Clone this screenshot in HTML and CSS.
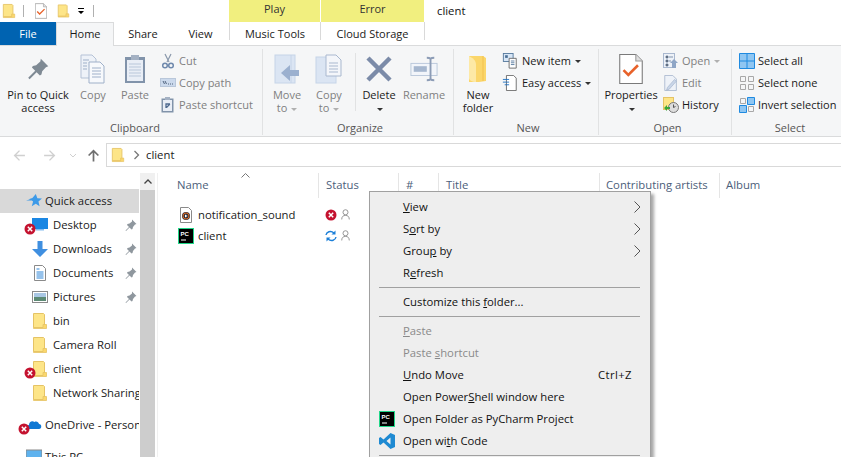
FILE: index.html
```html
<!DOCTYPE html>
<html lang="en">
<head>
  <meta charset="UTF-8" />
  <title>client</title>
  <link rel="stylesheet" href="styles.css">
</head>
<body>
  <svg class="defs" width="0" height="0">
    <symbol id="folder" viewBox="0 0 16 16">
      <path d="M1.500 .5h10l1 1v13h-11z" fill="#fde588" stroke="#e5c365"/>
      <path d="M11 11.500h3.500v4h-13v-1h9.500z" fill="#fbd76c" stroke="#e5c365" stroke-width=".8"/>
    </symbol>
    <symbol id="badge" viewBox="0 0 12 12">
      <circle cx="6" cy="6" r="5.500" fill="#c4122f"/>
      <path d="M3.800 3.800l4.400 4.400M8.200 3.800l-4.400 4.400" stroke="#fff" stroke-width="1.500"/>
    </symbol>
    <symbol id="pin" viewBox="0 0 12 12">
      <path d="M7 .5l4.500 4.500-1.500 .5-2 2.500-.5 2-1 .5-2-2-3.500 3.500-.5-.5 3.500-3.500-2-2 .5-1 2-.5 2.500-2z" fill="#8f979e"/>
    </symbol>
    <symbol id="pycharm" viewBox="0 0 16 16">
      <rect x=".5" y=".5" width="15" height="15" fill="#000" stroke="#21d789"/>
      <text x="2.500" y="7.500" class="pc-text">PC</text>
      <rect x="3" y="11.500" width="5" height="1" fill="#fff"/>
    </symbol>
    <symbol id="person" viewBox="0 0 10 12">
      <circle cx="5" cy="3.500" r="2.800" fill="none" stroke="#8b8b8b"/>
      <path d="M.8 11.500c0-3 1.500-4.500 4.200-4.500s4.200 1.500 4.200 4.500" fill="none" stroke="#8b8b8b"/>
    </symbol>
    <symbol id="chevron" viewBox="0 0 7 12">
      <path d="M.5 .5l5.500 5.500-5.500 5.500" fill="none" stroke="#555"/>
    </symbol>
    <symbol id="page-check" viewBox="0 0 22 28">
      <path d="M.5 .5h15l6 6v21h-21z" fill="#fff" stroke="#7a7a7a"/>
      <path d="M15.500 .5v6h6" fill="#e0e0e0" stroke="#9a9a9a"/>
      <path d="M4 15l4.500 4.500 9-9" fill="none" stroke="#e8622a" stroke-width="2.400"/>
    </symbol>
  </svg>

  <div class="titlebar">
    <svg class="qa-folder"><use href="#folder"/></svg>
    <span class="qa-sep"></span>
    <svg class="qa-page"><use href="#page-check"/></svg>
    <svg class="qa-folder2"><use href="#folder"/></svg>
    <svg class="qa-drop" viewBox="0 0 8 8"><path d="M1 1h6v1H1zM1 4h6L4 7z" fill="#000"/></svg>
    <span class="qa-sep"></span>
    <div class="tool-heads">
      <span class="tool-head head-play">Play</span>
      <span class="tool-head head-error">Error</span>
    </div>
    <span class="win-title">client</span>
  </div>

  <div class="tabs">
    <span class="tab tab-file">File</span>
    <span class="tab tab-home">Home</span>
    <span class="tab tab-share">Share</span>
    <span class="tab tab-view">View</span>
    <span class="tab tab-music">Music Tools</span>
    <span class="tab tab-cloud">Cloud Storage</span>
  </div>

  <div class="ribbon">
    <section class="group group-clipboard">
      <div class="group-body">
        <div class="big w60">
          <svg class="big-icon" viewBox="-3 -3 30 30"><path d="M15 1l8 8-2.500 1-4 4.500-.8 3.500-1.700 1-3.500-3.500-7.500 7.500-1.500-1.500 7.500-7.500-3.500-3.500 1-1.700 3.500-.8 4.500-4z" fill="#7f8a94"/></svg>
          <span>Pin to Quick<br>access</span>
        </div>
        <div class="big w50 off">
          <svg class="big-icon" viewBox="0 0 26 30"><path d="M1 1h11l4 4v19H1z" fill="#eef2f8" stroke="#b5c2d6"/><path d="M9 8h11l4 4v17H9z" fill="#f7f9fc" stroke="#9fb0c9"/><path d="M12 14h9M12 17h9M12 20h9M12 23h9M3 6h6M3 9h4M3 12h4M3 15h4" stroke="#9fb0c9"/></svg>
          <span>Copy</span>
        </div>
        <div class="big w34 off">
          <svg class="big-icon" viewBox="0 0 22 30"><rect x="1" y="3" width="20" height="26" fill="#8193aa"/><rect x="3" y="6" width="16" height="21" fill="#e9eef6"/><rect x="7" y="1" width="8" height="5" fill="#a4b1c3"/><path d="M5 10h12M5 13h12M5 16h12M5 19h12M5 22h12" stroke="#b9c7da"/></svg>
          <span>Paste</span>
        </div>
        <div class="small-col col-clip">
          <div class="small off">
            <svg class="small-icon" viewBox="0 0 16 16"><path d="M5 1l4 8M11 1L7 9" stroke="#8a98ab" stroke-width="1.200"/><circle cx="5" cy="12.500" r="2.300" fill="none" stroke="#6f89ad" stroke-width="1.500"/><circle cx="11" cy="12.500" r="2.300" fill="none" stroke="#6f89ad" stroke-width="1.500"/></svg>
            <span>Cut</span>
          </div>
          <div class="small off">
            <svg class="small-icon" viewBox="0 0 16 16"><rect x=".5" y="3.500" width="15" height="8" fill="#cbd9ec" stroke="#b9c7da"/><path d="M3 6l1.500 3M5 6l1.500 3M8 9h1M10 9h1M12 9h1" stroke="#51647f"/></svg>
            <span>Copy path</span>
          </div>
          <div class="small off">
            <svg class="small-icon" viewBox="0 0 16 16"><rect x="1.500" y="1.500" width="12" height="14" fill="#8193aa"/><rect x="3" y="3" width="9" height="11" fill="#e9eef6"/><rect x="5" y="0" width="5" height="3" fill="#a4b1c3"/><path d="M6 11V7h4M6.500 10.500L10 7" fill="none" stroke="#4f6a8f" stroke-width="1.300"/></svg>
            <span>Paste shortcut</span>
          </div>
        </div>
      </div>
      <div class="group-label">Clipboard</div>
    </section>

    <section class="group group-organize">
      <div class="group-body">
        <div class="big w40 off">
          <svg class="big-icon" viewBox="0 0 28 30"><rect x="2" y="1" width="20" height="28" fill="#dbe5f3" stroke="#c6d4e8"/><path d="M18 1v28" stroke="#c6d4e8"/><path d="M8 19l9-8v5h9v6h-9v5z" fill="#9bb0cf"/></svg>
          <span>Move<br>to <i class="caret light"></i></span>
        </div>
        <div class="big w40 off">
          <svg class="big-icon" viewBox="0 0 28 30"><rect x="1" y="3" width="20" height="26" fill="#dbe5f3" stroke="#c6d4e8"/><path d="M11 1h10l5 5v16H11z" fill="#f4f6fa" stroke="#a9b8cf"/><path d="M14 9h9M14 12h9M14 15h9M14 18h9" stroke="#a9b8cf"/></svg>
          <span>Copy<br>to <i class="caret light"></i></span>
        </div>
        <span class="sub-sep"></span>
        <div class="big w40">
          <svg class="big-icon" viewBox="0 0 28 28"><path d="M3 3l22 22M25 3L3 25" stroke="#7b8ba8" stroke-width="4.500"/></svg>
          <span>Delete<br><i class="caret"></i></span>
        </div>
        <div class="big w46 off">
          <svg class="big-icon" viewBox="0 0 30 30"><rect x="1" y="9" width="28" height="13" fill="#f2f5fa" stroke="#b9c7da"/><rect x="4" y="12" width="14" height="6" fill="#a6b7cf"/><path d="M18 3c3 0 4 1 4 1s1-1 4-1M22 4v22M18 27c3 0 4-1 4-1s1 1 4 1" fill="none" stroke="#8c9cb6" stroke-width="2"/></svg>
          <span>Rename</span>
        </div>
      </div>
      <div class="group-label">Organize</div>
    </section>

    <section class="group group-new">
      <div class="group-body">
        <div class="big w40">
          <svg class="big-icon" viewBox="0 0 22 30"><path d="M2 2h14l3 2v23l-7 1H2z" fill="#fbd66a"/><path d="M2 2c6 3 7 6 7 9v17c-4 0-7-2-7-4z" fill="#fde9a6"/><path d="M16 2v25" stroke="#f2c14f"/></svg>
          <span>New<br>folder</span>
        </div>
        <div class="small-col col-new">
          <div class="small wide">
            <svg class="small-icon" viewBox="0 0 16 18"><rect x=".5" y=".5" width="11" height="9" fill="#d7e6f6" stroke="#53779c"/><rect x="2.500" y="2.500" width="3" height="3" fill="#4a6e94"/><path d="M7 6h8v11H7z" fill="#fff" stroke="#666"/><path d="M9 9h4M9 11h4M9 13h4" stroke="#53779c"/></svg>
            <span>New item <i class="caret"></i></span>
          </div>
          <div class="small wide">
            <svg class="small-icon" viewBox="0 0 16 18"><path d="M4 .5h8l3 3v14H4z" fill="#fff" stroke="#666"/><path d="M0 5h7M0 8h7M2 11h5" stroke="#1b6fc2"/></svg>
            <span>Easy access <i class="caret"></i></span>
          </div>
        </div>
      </div>
      <div class="group-label">New</div>
    </section>

    <section class="group group-open">
      <div class="group-body">
        <div class="big w54">
          <svg class="big-icon"><use href="#page-check"/></svg>
          <span>Properties<br><i class="caret"></i></span>
        </div>
        <div class="small-col col-open">
          <div class="small off">
            <svg class="small-icon" viewBox="0 0 16 16"><rect x=".5" y=".5" width="11" height="14" fill="#eef2f8" stroke="#a9b8cf"/><path d="M3 3h2v2H3zM3 7h2v2H3zM3 11h2v2H3zM6 4h4M6 8h2" stroke="#8093ad"/><path d="M11 6l4 4h-2v5h-4v-5H7z" fill="#8fa6c6"/></svg>
            <span>Open <i class="caret light"></i></span>
          </div>
          <div class="small off">
            <svg class="small-icon" viewBox="0 0 16 18"><path d="M1 .5h9l4 4v13H1z" fill="#eef2f8" stroke="#a9b8cf"/><path d="M4 14l8-9 2 2-8 9-3 1z" fill="#c9d6e8" stroke="#9fb0c9" stroke-width=".7"/></svg>
            <span>Edit</span>
          </div>
          <div class="small">
            <svg class="small-icon" viewBox="0 0 16 16"><rect x=".5" y=".5" width="10" height="12" fill="#fde588" stroke="#e5c365"/><circle cx="10.500" cy="10.500" r="5" fill="#ddd" stroke="#777"/><path d="M10.500 7.500v3l2-1" fill="none" stroke="#555"/><path d="M1 11l3-3v2h3v2H4v2z" fill="#3aa63a"/></svg>
            <span>History</span>
          </div>
        </div>
      </div>
      <div class="group-label">Open</div>
    </section>

    <section class="group group-select">
      <div class="group-body">
        <div class="small-col">
          <div class="small">
            <svg class="small-icon" viewBox="0 0 16 16"><path d="M.5 .5h15v15H.5zM8 .5v15M.5 8h15" fill="#8fc6f2" stroke="#1f8ae0"/></svg>
            <span>Select all</span>
          </div>
          <div class="small">
            <svg class="small-icon" viewBox="0 0 16 16"><path d="M1.500 1.500h5v5h-5zM9.500 1.500h5v5h-5zM1.500 9.500h5v5h-5zM9.500 9.500h5v5h-5z" fill="none" stroke="#a8a8a8"/></svg>
            <span>Select none</span>
          </div>
          <div class="small">
            <svg class="small-icon" viewBox="0 0 16 16"><path d="M8.500 .5h7v7h-7zM.5 8.500h7v7h-7z" fill="#8fc6f2" stroke="#1f8ae0"/><path d="M1.500 1.500h5v5h-5zM9.500 9.500h5v5h-5z" fill="none" stroke="#a8a8a8"/></svg>
            <span>Invert selection</span>
          </div>
        </div>
      </div>
      <div class="group-label">Select</div>
    </section>
  </div>

  <div class="addressrow">
    <svg class="nav-arrow arrow-back" viewBox="0 0 12 12"><path d="M11 6H1.500M6 1.500L1.500 6 6 10.500" fill="none" stroke="#d0d0d0" stroke-width="1.300"/></svg>
    <svg class="nav-arrow arrow-fwd" viewBox="0 0 12 12"><path d="M1 6h9.500M6 1.500L10.500 6 6 10.500" fill="none" stroke="#d0d0d0" stroke-width="1.300"/></svg>
    <svg class="nav-drop" viewBox="0 0 8 5"><path d="M1 1l3 3 3-3" fill="none" stroke="#d0d0d0"/></svg>
    <svg class="nav-arrow arrow-up" viewBox="0 0 12 12"><path d="M6 11.500V1.500M1.500 6L6 1.500 10.500 6" fill="none" stroke="#6f6f6f" stroke-width="1.600"/></svg>
    <div class="addressbox">
      <svg class="addr-folder"><use href="#folder"/></svg>
      <svg class="addr-chev" viewBox="0 0 7 12"><path d="M1.500 2l4 4-4 4" fill="none" stroke="#777" stroke-width="1.300"/></svg>
      <span class="addr-text">client</span>
    </div>
  </div>

  <div class="main">
    <nav class="nav">
      <div class="nav-item top selected">
        <svg class="nav-icon" viewBox="0 0 18 16"><path d="M11 0l1.800 5 5.200 .3-4 3.200 1.300 5.500-4.300-3-4.500 3 1.500-5.500-1.500-1.200H0l5-1.300H3l4.200-1.500z" fill="#3d9ae8"/></svg>
        <span class="nav-name">Quick access</span>
      </div>
      <div class="nav-item">
        <span class="icon-wrap">
          <svg class="nav-icon" viewBox="0 0 16 16"><rect y="1" width="16" height="11" fill="#1b87e3"/><rect x="4" y="12" width="8" height="1.500" fill="#86bdf0"/></svg>
          <svg class="badge"><use href="#badge"/></svg>
        </span>
        <span class="nav-name">Desktop</span>
        <svg class="nav-pin"><use href="#pin"/></svg>
      </div>
      <div class="nav-item">
        <svg class="nav-icon" viewBox="0 0 16 16"><path d="M5.500 0h5v8H16l-8 8-8-8h5.500z" fill="#3f8fe0"/></svg>
        <span class="nav-name">Downloads</span>
        <svg class="nav-pin"><use href="#pin"/></svg>
      </div>
      <div class="nav-item">
        <svg class="nav-icon" viewBox="0 0 16 16"><path d="M2.500 .5h8l3 3v12h-11z" fill="#fff" stroke="#8a8a8a"/><path d="M4.500 4h3M4.500 7h7M4.500 9h7M4.500 11h7M4.500 13h7" stroke="#2f86d8"/></svg>
        <span class="nav-name">Documents</span>
        <svg class="nav-pin"><use href="#pin"/></svg>
      </div>
      <div class="nav-item">
        <svg class="nav-icon" viewBox="0 0 16 16"><rect x=".5" y="2.500" width="15" height="11" fill="#fff" stroke="#8a8a8a"/><rect x="2" y="4" width="12" height="4" fill="#a9c7e4"/><rect x="2" y="8" width="12" height="4" fill="#5c8a74"/></svg>
        <span class="nav-name">Pictures</span>
        <svg class="nav-pin"><use href="#pin"/></svg>
      </div>
      <div class="nav-item">
        <svg class="nav-icon"><use href="#folder"/></svg>
        <span class="nav-name">bin</span>
      </div>
      <div class="nav-item">
        <svg class="nav-icon"><use href="#folder"/></svg>
        <span class="nav-name">Camera Roll</span>
      </div>
      <div class="nav-item">
        <span class="icon-wrap">
          <svg class="nav-icon"><use href="#folder"/></svg>
          <svg class="badge"><use href="#badge"/></svg>
        </span>
        <span class="nav-name">client</span>
      </div>
      <div class="nav-item">
        <svg class="nav-icon"><use href="#folder"/></svg>
        <span class="nav-name">Network Sharing</span>
      </div>
      <div class="nav-item top gap">
        <span class="icon-wrap">
          <svg class="nav-icon" viewBox="0 0 16 16"><path d="M3 12c-3 0-3-4 0-4 0-3 3-5 5.500-3 2-1 4 0 4.500 2 3 0 3 5 0 5z" fill="#0f78d4"/></svg>
          <svg class="badge"><use href="#badge"/></svg>
        </span>
        <span class="nav-name">OneDrive - Personal</span>
      </div>
      <div class="nav-item top gap">
        <svg class="nav-icon" viewBox="0 0 16 16"><rect y="1" width="16" height="11" fill="#5eb2ee" stroke="#8a8a8a"/></svg>
        <span class="nav-name">This PC</span>
      </div>
    </nav>

    <div class="scrollbar">
      <div class="scroll-up">
        <svg class="scroll-chev" viewBox="0 0 8 5"><path d="M.5 4.500L4 1l3.500 3.500" fill="none" stroke="#444" stroke-width="1.300"/></svg>
      </div>
      <div class="scroll-thumb"></div>
    </div>

    <div class="files">
      <div class="columns">
        <span class="col col-name">Name
          <svg class="sort-arrow" viewBox="0 0 9 5"><path d="M.5 4.500l4-4 4 4" fill="none" stroke="#777"/></svg>
        </span>
        <span class="col col-status">Status</span>
        <span class="col col-num">#</span>
        <span class="col col-title">Title</span>
        <span class="col col-artists">Contributing artists</span>
        <span class="col col-album">Album</span>
      </div>
      <div class="file-row">
        <svg class="file-icon" viewBox="0 0 16 16"><path d="M2.500 .5h8l3 3v12h-11z" fill="#fff" stroke="#8a8a8a"/><circle cx="8" cy="9" r="4" fill="#33333d"/><circle cx="8" cy="9" r="3" fill="none" stroke="#d9661f"/><path d="M7 7.500l2.500 1.500L7 10.500z" fill="#fff"/></svg>
        <span class="file-name">notification_sound</span>
        <svg class="status-icon"><use href="#badge"/></svg>
        <svg class="person-icon"><use href="#person"/></svg>
      </div>
      <div class="file-row">
        <svg class="file-icon"><use href="#pycharm"/></svg>
        <span class="file-name">client</span>
        <svg class="status-icon" viewBox="0 0 12 12"><path d="M1 5c.5-3 4.500-5 8-2M11 7c-.5 3-4.500 5-8 2" fill="none" stroke="#1b7fd8" stroke-width="1.400"/><path d="M10.500 .5v4h-4zM1.500 11.500v-4h4z" fill="#1b7fd8"/></svg>
        <svg class="person-icon"><use href="#person"/></svg>
      </div>
    </div>
  </div>

  <div class="menu">
    <div class="menu-item"><span><u>V</u>iew</span><svg class="menu-chev"><use href="#chevron"/></svg></div>
    <div class="menu-item"><span>S<u>o</u>rt by</span><svg class="menu-chev"><use href="#chevron"/></svg></div>
    <div class="menu-item"><span>Grou<u>p</u> by</span><svg class="menu-chev"><use href="#chevron"/></svg></div>
    <div class="menu-item"><span>R<u>e</u>fresh</span></div>
    <div class="menu-sep"></div>
    <div class="menu-item"><span>Customize this <u>f</u>older...</span></div>
    <div class="menu-sep"></div>
    <div class="menu-item disabled"><span><u>P</u>aste</span></div>
    <div class="menu-item disabled"><span>Paste <u>s</u>hortcut</span></div>
    <div class="menu-item"><span><u>U</u>ndo Move</span><span class="shortcut">Ctrl+Z</span></div>
    <div class="menu-item"><span>Open Power<u>S</u>hell window here</span></div>
    <div class="menu-item">
      <svg class="menu-icon"><use href="#pycharm"/></svg>
      <span>Open Folder as PyCharm Project</span>
    </div>
    <div class="menu-item">
      <svg class="menu-icon" viewBox="0 0 16 16"><path d="M11.500 0L16 2v12l-4.500 2L4.500 9.500 1.500 12 0 11V5l1.500-1 3 2.500zM11.500 4.500L7.500 8l4 3.500z" fill="#1f8ad2"/></svg>
      <span>Open wi<u>t</u>h Code</span>
    </div>
    <div class="menu-sep"></div>
  </div>
</body>
</html>
```

FILE: styles.css
```css
html, body {
  margin: 0;
  height: 100%;
}
body {
  position: relative;
  width: 841px;
  height: 457px;
  overflow: hidden;
  background: white;
  font-family: "Open Sans", Arial, sans-serif;
  font-size: 11px;
  color: #1a1a1a;
}
svg {
  display: block;
  flex: none;
}
.defs {
  position: absolute;
}
.pc-text {
  font-family: "Liberation Sans", sans-serif;
  font-size: 6px;
  font-weight: bold;
  fill: white;
}

/* title bar */
.titlebar {
  display: flex;
  align-items: center;
  height: 22px;
}
.qa-folder {
  width: 14px;
  height: 16px;
  margin-left: 2px;
}
.qa-sep {
  width: 1px;
  height: 12px;
  background: #b0b0b0;
  margin-left: 7px;
}
.qa-page {
  width: 12px;
  height: 16px;
  margin-left: 11px;
}
.qa-folder2 {
  width: 13px;
  height: 16px;
  margin-left: 10px;
}
.qa-drop {
  width: 8px;
  height: 8px;
  margin-left: 7px;
}
.titlebar .qa-drop + .qa-sep {
  margin-left: 8px;
}
.tool-heads {
  display: flex;
  gap: 1px;
  margin-left: 135px;
  height: 22px;
}
.tool-head {
  background: #f1ef7f;
  text-align: center;
  line-height: 18px;
  color: #333;
}
.head-play {
  width: 91px;
}
.head-error {
  width: 103px;
}
.win-title {
  margin-left: 13px;
  font-size: 11.300px;
  color: #111;
  margin-bottom: 2px;
}

/* tabs */
.tabs {
  display: flex;
  height: 23px;
  border-bottom: 1px solid #dadbdc;
}
.tab {
  text-align: center;
  line-height: 24px;
  height: 23px;
  box-sizing: border-box;
}
.tab-file {
  width: 56px;
  background: #0063b1;
  color: white;
}
.tab-home {
  width: 58px;
  height: 24px;
  background: #f5f6f7;
  border: 1px solid #dadbdc;
  border-bottom: none;
  line-height: 22px;
  position: relative;
  z-index: 1;
}
.tab-share {
  width: 58px;
}
.tab-view {
  width: 57px;
}
.tab-music {
  width: 92px;
  border-left: 1px solid #d9d9d9;
  border-right: 1px solid #d9d9d9;
  height: 18px;
  overflow: visible;
}
.tab-cloud {
  width: 104px;
  border-right: 1px solid #d9d9d9;
  height: 18px;
  overflow: visible;
}

/* ribbon */
.ribbon {
  display: flex;
  height: 90px;
  background: #f5f6f7;
  border-bottom: 1px solid #dadbdc;
}
.group {
  display: flex;
  flex-direction: column;
  box-sizing: border-box;
  border-right: 1px solid #e1e2e3;
  margin: 3px 0 1px;
}
.group-body {
  display: flex;
  height: 71px;
  padding-top: 1px;
}
.group-label {
  height: 15px;
  line-height: 16px;
  text-align: center;
  color: #555;
}
.group-clipboard {
  width: 263px;
  padding-left: 8px;
}
.group-organize {
  width: 191px;
  padding-left: 4px;
}
.group-new {
  width: 145px;
  padding-left: 4px;
}
.group-open {
  width: 133px;
  padding-left: 5px;
}
.group-select {
  width: 109px;
  padding-left: 7px;
  border-right: none;
}
.big {
  display: flex;
  flex-direction: column;
  align-items: center;
  text-align: center;
  line-height: 13px;
  flex: none;
  white-space: nowrap;
}
.big-icon {
  width: 28px;
  height: 30px;
  margin: 4px 0 4px;
}
.w34 { width: 34px; }
.w40 { width: 40px; margin-right: 2px; }
.w46 { width: 46px; }
.w50 { width: 50px; }
.w54 { width: 54px; }
.w60 { width: 60px; }
.off {
  color: #7f7f7f;
}
.sub-sep {
  width: 1px;
  height: 58px;
  margin: 3px 3px 0 4px;
  background: #e1e2e3;
}
.small-col {
  display: flex;
  flex-direction: column;
}
.col-clip {
  margin-left: 8px;
}
.col-new {
  margin-left: 2px;
}
.col-open {
  margin-left: 5px;
}
.small {
  display: flex;
  align-items: center;
  gap: 3px;
  height: 22px;
  white-space: nowrap;
}
.small span {
  margin-bottom: 2px;
}
.small-icon {
  width: 16px;
  height: 16px;
}
.small.wide {
  gap: 4px;
}
.caret {
  display: inline-block;
  vertical-align: middle;
  border: 3px solid transparent;
  border-top: 3px solid #333;
  border-bottom: none;
  margin-left: 1px;
}
.caret.light {
  border-top-color: #b0b0b0;
}

/* address */
.addressrow {
  display: flex;
  align-items: center;
  height: 36px;
}
.nav-arrow {
  width: 13px;
  height: 13px;
}
.arrow-back {
  margin-left: 13px;
}
.arrow-fwd {
  margin-left: 17px;
}
.nav-drop {
  width: 8px;
  height: 5px;
  margin-left: 13px;
}
.arrow-up {
  margin-left: 10px;
}
.addressbox {
  display: flex;
  align-items: center;
  flex: 1;
  height: 22px;
  margin-left: 6px;
  border: 1px solid #d9d9d9;
  border-right: none;
  font-size: 11.300px;
}
.addr-folder {
  width: 14px;
  height: 16px;
  margin-left: 4px;
}
.addr-chev {
  width: 7px;
  height: 12px;
  margin-left: 8px;
  margin-right: 6px;
}
.addr-text {
  margin-bottom: 2px;
}

/* main */
.main {
  display: flex;
  height: 284px;
}
.nav {
  width: 139px;
  flex: none;
  padding-top: 16px;
  overflow: hidden;
  font-size: 11.300px;
}
.nav-item {
  display: flex;
  align-items: center;
  height: 24px;
  padding-left: 32px;
  white-space: nowrap;
  position: relative;
}
.nav-item.top {
  padding-left: 26px;
}
.nav-item.gap {
  margin-top: 8px;
}
.nav-item.selected {
  background: #d9d9d9;
}
.nav-icon {
  width: 16px;
  height: 16px;
}
.nav-name {
  margin: 0 0 2px 5px;
}
.nav-item.top .nav-name {
  margin-left: 3px;
}
.icon-wrap {
  position: relative;
  width: 16px;
  height: 16px;
  flex: none;
}
.badge {
  position: absolute;
  left: -8px;
  top: 6px;
  width: 12px;
  height: 12px;
}
.nav-pin {
  position: absolute;
  left: 125px;
  top: 6px;
  width: 12px;
  height: 12px;
}
.scrollbar {
  width: 15px;
  margin-left: 1px;
  flex: none;
  display: flex;
  flex-direction: column;
}
.scroll-up {
  height: 17px;
  background: #f0f0f0;
  display: flex;
  align-items: center;
  justify-content: center;
}
.scroll-chev {
  width: 8px;
  height: 5px;
}
.scroll-thumb {
  flex: 1;
  background: #cdcdcd;
}

/* file list */
.files {
  flex: 1;
  margin-left: 2px;
  border-left: 1px solid #f0f0f0;
}
.columns {
  display: flex;
  height: 25px;
  margin-bottom: 6px;
  color: #4c607a;
  font-size: 11.300px;
  line-height: 23px;
}
.col {
  box-sizing: border-box;
  border-right: 1px solid #e5e5e5;
  padding-left: 7px;
  position: relative;
  white-space: nowrap;
}
.col-name {
  width: 161px;
  padding-left: 19px;
}
.col-status { width: 80px; }
.col-num { width: 40px; }
.col-title { width: 161px; }
.col-artists { width: 120px; padding-left: 6px; }
.col-album { border-right: none; padding-left: 6px; }
.sort-arrow {
  position: absolute;
  left: 83px;
  top: 0;
  width: 9px;
  height: 5px;
}
.file-row {
  display: flex;
  align-items: center;
  height: 21px;
  font-size: 11.300px;
  padding-left: 20px;
  position: relative;
}
.file-icon {
  width: 16px;
  height: 16px;
  margin-right: 4px;
}
.status-icon {
  position: absolute;
  left: 167px;
  top: 5px;
  width: 12px;
  height: 12px;
}
.person-icon {
  position: absolute;
  left: 183px;
  top: 5px;
  width: 9px;
  height: 11px;
}

/* context menu */
.menu {
  position: absolute;
  left: 369px;
  top: 191px;
  width: 282px;
  height: 280px;
  box-sizing: border-box;
  padding: 4px 0 0 0;
  background: #eeeeee;
  border: 1px solid #a0a0a0;
  box-shadow: 3px 3px 3px rgba(0,0,0,0.35);
  font-size: 11.300px;
  color: #111;
}
.menu-item {
  display: flex;
  align-items: center;
  height: 22px;
  padding-left: 33px;
  position: relative;
}
.menu-item span {
  margin-bottom: 2px;
}
.menu-item.disabled {
  color: #8a8a8a;
}
.menu-sep {
  height: 1px;
  margin: 3px 10px 3px 9px;
  background: #a0a0a0;
}
.menu-chev {
  position: absolute;
  left: 264px;
  top: 5px;
  width: 7px;
  height: 12px;
}
.shortcut {
  position: absolute;
  left: 228px;
  letter-spacing: 0.4px;
}
.menu-icon {
  position: absolute;
  left: 9px;
  top: 3px;
  width: 16px;
  height: 16px;
}
```
